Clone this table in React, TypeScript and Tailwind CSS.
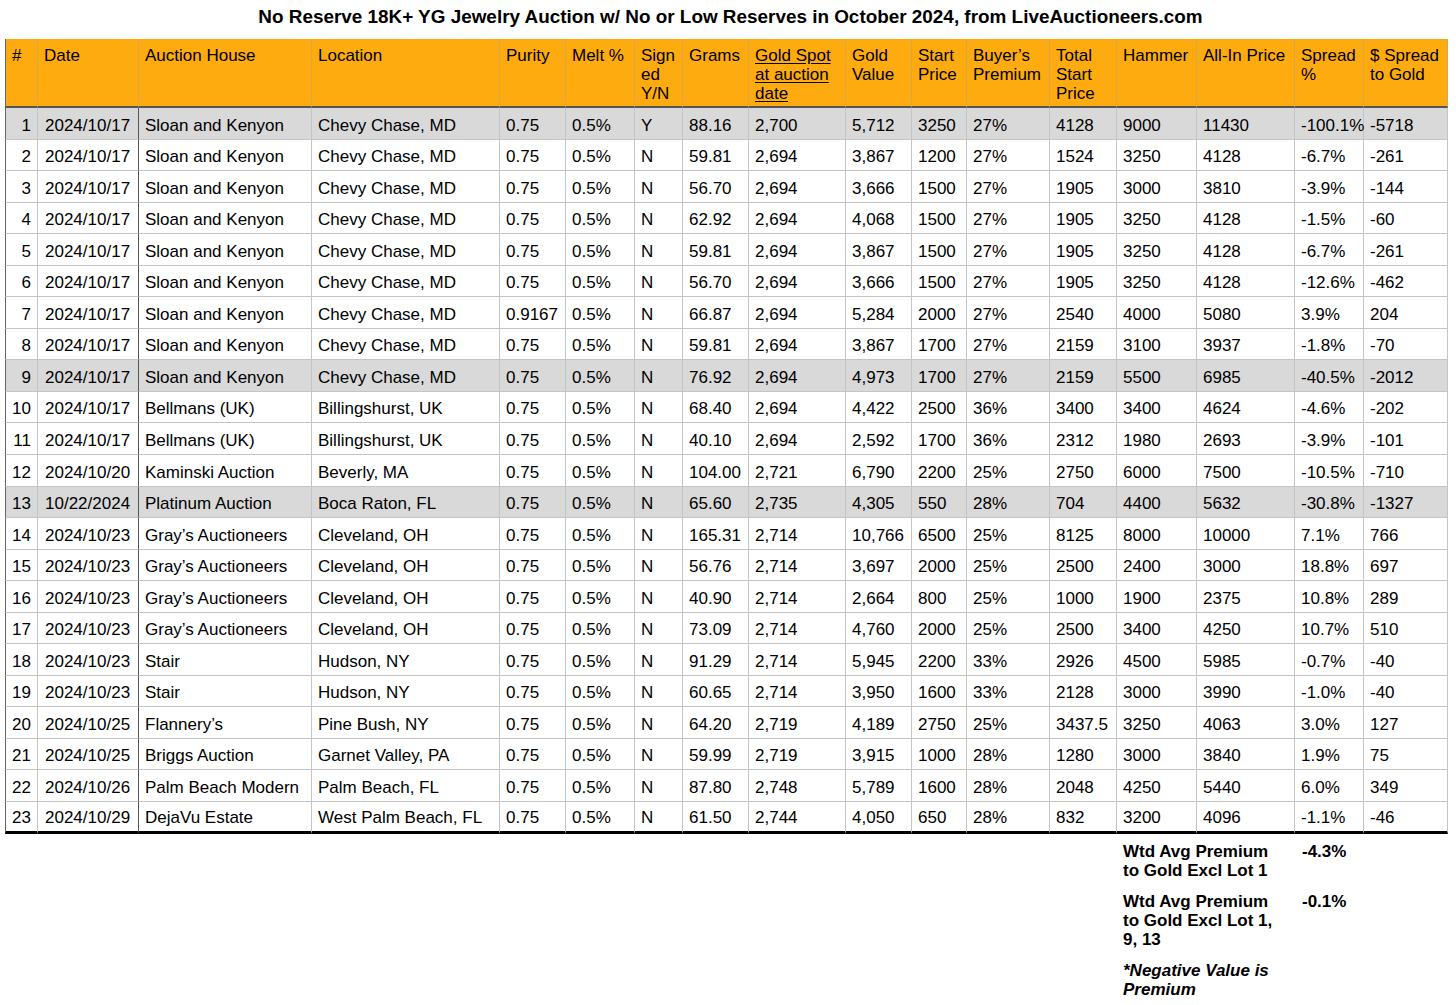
import { FC, ReactNode } from 'react';

// date, house, location, purity, signed, grams, spot, gold value,
// start, buyer's premium, total start, hammer, all-in, spread %, $ spread
type Row = string[];

const SK = ['2024/10/17', 'Sloan and Kenyon', 'Chevy Chase, MD'];
const GA = ['2024/10/23', 'Gray’s Auctioneers', 'Cleveland, OH'];

const rows: Row[] = [
  [...SK, '0.75', 'Y', '88.16', '2,700', '5,712', '3250', '27%', '4128', '9000', '11430', '-100.1%', '-5718'],
  [...SK, '0.75', 'N', '59.81', '2,694', '3,867', '1200', '27%', '1524', '3250', '4128', '-6.7%', '-261'],
  [...SK, '0.75', 'N', '56.70', '2,694', '3,666', '1500', '27%', '1905', '3000', '3810', '-3.9%', '-144'],
  [...SK, '0.75', 'N', '62.92', '2,694', '4,068', '1500', '27%', '1905', '3250', '4128', '-1.5%', '-60'],
  [...SK, '0.75', 'N', '59.81', '2,694', '3,867', '1500', '27%', '1905', '3250', '4128', '-6.7%', '-261'],
  [...SK, '0.75', 'N', '56.70', '2,694', '3,666', '1500', '27%', '1905', '3250', '4128', '-12.6%', '-462'],
  [...SK, '0.9167', 'N', '66.87', '2,694', '5,284', '2000', '27%', '2540', '4000', '5080', '3.9%', '204'],
  [...SK, '0.75', 'N', '59.81', '2,694', '3,867', '1700', '27%', '2159', '3100', '3937', '-1.8%', '-70'],
  [...SK, '0.75', 'N', '76.92', '2,694', '4,973', '1700', '27%', '2159', '5500', '6985', '-40.5%', '-2012'],
  ['2024/10/17', 'Bellmans (UK)', 'Billingshurst, UK', '0.75', 'N', '68.40', '2,694', '4,422', '2500', '36%', '3400', '3400', '4624', '-4.6%', '-202'],
  ['2024/10/17', 'Bellmans (UK)', 'Billingshurst, UK', '0.75', 'N', '40.10', '2,694', '2,592', '1700', '36%', '2312', '1980', '2693', '-3.9%', '-101'],
  ['2024/10/20', 'Kaminski Auction', 'Beverly, MA', '0.75', 'N', '104.00', '2,721', '6,790', '2200', '25%', '2750', '6000', '7500', '-10.5%', '-710'],
  ['10/22/2024', 'Platinum Auction', 'Boca Raton, FL', '0.75', 'N', '65.60', '2,735', '4,305', '550', '28%', '704', '4400', '5632', '-30.8%', '-1327'],
  [...GA, '0.75', 'N', '165.31', '2,714', '10,766', '6500', '25%', '8125', '8000', '10000', '7.1%', '766'],
  [...GA, '0.75', 'N', '56.76', '2,714', '3,697', '2000', '25%', '2500', '2400', '3000', '18.8%', '697'],
  [...GA, '0.75', 'N', '40.90', '2,714', '2,664', '800', '25%', '1000', '1900', '2375', '10.8%', '289'],
  [...GA, '0.75', 'N', '73.09', '2,714', '4,760', '2000', '25%', '2500', '3400', '4250', '10.7%', '510'],
  ['2024/10/23', 'Stair', 'Hudson, NY', '0.75', 'N', '91.29', '2,714', '5,945', '2200', '33%', '2926', '4500', '5985', '-0.7%', '-40'],
  ['2024/10/23', 'Stair', 'Hudson, NY', '0.75', 'N', '60.65', '2,714', '3,950', '1600', '33%', '2128', '3000', '3990', '-1.0%', '-40'],
  ['2024/10/25', 'Flannery’s', 'Pine Bush, NY', '0.75', 'N', '64.20', '2,719', '4,189', '2750', '25%', '3437.5', '3250', '4063', '3.0%', '127'],
  ['2024/10/25', 'Briggs Auction', 'Garnet Valley, PA', '0.75', 'N', '59.99', '2,719', '3,915', '1000', '28%', '1280', '3000', '3840', '1.9%', '75'],
  ['2024/10/26', 'Palm Beach Modern', 'Palm Beach, FL', '0.75', 'N', '87.80', '2,748', '5,789', '1600', '28%', '2048', '4250', '5440', '6.0%', '349'],
  ['2024/10/29', 'DejaVu Estate', 'West Palm Beach, FL', '0.75', 'N', '61.50', '2,744', '4,050', '650', '28%', '832', '3200', '4096', '-1.1%', '-46'],
];

// melt % is the same for every lot
const MELT = '0.5%';

// lots highlighted in grey (excluded from the second average)
const highlighted = [1, 9, 13];

const colWidths = [
  'w-[33px]',
  'w-[101px]',
  'w-[173px]',
  'w-[188px]',
  'w-[66px]',
  'w-[69px]',
  'w-[48px]',
  'w-[66px]',
  'w-[97px]',
  'w-[66px]',
  'w-[55px]',
  'w-[83px]',
  'w-[67px]',
  'w-[80px]',
  'w-[98px]',
  'w-[69px]',
  'w-[84px]',
];

const headers: ReactNode[] = [
  '#',
  'Date',
  'Auction House',
  'Location',
  'Purity',
  'Melt %',
  <>
    Sign
    <br />
    ed
    <br />
    Y/N
  </>,
  'Grams',
  <span className="underline underline-offset-2">
    Gold Spot
    <br />
    at auction
    <br />
    date
  </span>,
  <>
    Gold
    <br />
    Value
  </>,
  <>
    Start
    <br />
    Price
  </>,
  <>
    Buyer’s
    <br />
    Premium
  </>,
  <>
    Total
    <br />
    Start
    <br />
    Price
  </>,
  'Hammer',
  'All-In Price',
  <>
    Spread
    <br />%
  </>,
  <>
    $ Spread
    <br />
    to Gold
  </>,
];

const cellBase =
  'h-[31.56px] border-b border-r border-[#c4c4c4] pb-[4px] pl-[6px] pr-[2px] align-bottom leading-[19px] whitespace-nowrap';

const App: FC = () => {
  return (
    <div className="min-h-screen bg-white pl-[5px] font-['Liberation_Sans',Arial,sans-serif] text-[17px] text-black">
      <h1 className="flex h-[39px] items-center justify-center pb-[4px] text-[18.9px] font-bold">
        No Reserve 18K+ YG Jewelry Auction w/ No or Low Reserves in October
        2024, from LiveAuctioneers.com
      </h1>
      <table className="w-[1443px] table-fixed border-separate border-spacing-0">
        <colgroup>
          {colWidths.map((w, i) => (
            <col key={i} className={w} />
          ))}
        </colgroup>
        <thead>
          <tr>
            {headers.map((h, i) => (
              <th
                key={i}
                className={`h-[69px] border-b-2 border-r border-b-[#555] border-r-[#d9a74a] bg-[#fdab0f] pl-[6px] pr-[2px] pt-[7px] text-left align-top font-normal leading-[19px] ${
                  i === 0 ? 'border-l border-l-[#666]' : ''
                } ${i === headers.length - 1 ? 'border-r-[#c4c4c4]' : ''}`}
              >
                {h}
              </th>
            ))}
          </tr>
        </thead>
        <tbody>
          {rows.map((row, r) => {
            const lot = r + 1;
            const isLast = r === rows.length - 1;
            const bg = highlighted.includes(lot) ? 'bg-[#d9d9d9]' : 'bg-white';
            const bottom = isLast ? 'border-b-[3px] border-b-black' : '';
            const cells = [...row.slice(0, 4), MELT, ...row.slice(4)];
            return (
              <tr key={lot} className={bg}>
                <td
                  className={`${cellBase} ${bottom} border-l border-l-[#666] pr-[6px] text-right`}
                >
                  {lot}
                </td>
                {cells.map((value, c) => (
                  <td
                    key={c}
                    className={`${cellBase} ${bottom} ${
                      c === 0 ? 'border-r-[#555] pl-[7px]' : ''
                    }`}
                  >
                    {value}
                  </td>
                ))}
              </tr>
            );
          })}
        </tbody>
        <tfoot className="font-bold">
          <tr>
            <td colSpan={13} />
            <td colSpan={2} className="px-[6px] pt-[8px] pb-[6px] align-top leading-[19px]">
              <div className="w-[160px]">Wtd Avg Premium to Gold Excl Lot 1</div>
            </td>
            <td className="px-[7px] pt-[8px] align-top leading-[19px]">-4.3%</td>
            <td />
          </tr>
          <tr>
            <td colSpan={13} />
            <td colSpan={2} className="px-[6px] py-[6px] align-top leading-[19px]">
              <div className="w-[160px]">Wtd Avg Premium to Gold Excl Lot 1, 9, 13</div>
            </td>
            <td className="px-[7px] py-[6px] align-top leading-[19px]">-0.1%</td>
            <td />
          </tr>
          <tr>
            <td colSpan={13} />
            <td colSpan={2} className="px-[6px] py-[6px] align-top italic leading-[19px]">
              <div className="w-[160px]">*Negative Value is Premium</div>
            </td>
            <td colSpan={2} />
          </tr>
        </tfoot>
      </table>
    </div>
  );
};

export default App;
